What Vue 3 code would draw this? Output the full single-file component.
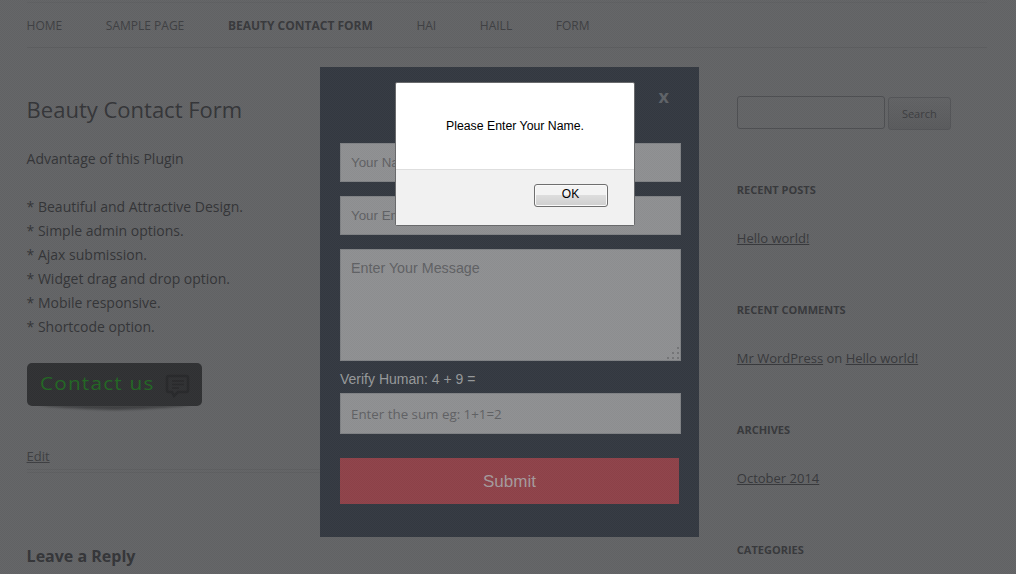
<script setup>
const nav = ['Home', 'Sample Page', 'Beauty Contact Form', 'Hai', 'Haill', 'Form']
const features = [
  'Beautiful and Attractive Design.',
  'Simple admin options.',
  'Ajax submission.',
  'Widget drag and drop option.',
  'Mobile responsive.',
  'Shortcode option.',
]
</script>

<template>
  <div class="page">
    <nav class="nav">
      <a v-for="n in nav" :key="n" :class="{ current: n === 'Beauty Contact Form' }">{{ n }}</a>
    </nav>
    <div class="columns">
      <main class="main">
        <h1>Beauty Contact Form</h1>
        <p class="lead">Advantage of this Plugin</p>
        <ul class="features">
          <li v-for="f in features" :key="f">* {{ f }}</li>
        </ul>
        <div class="contact">
          <svg class="shade" width="175" height="12" viewBox="0 0 175 12"><path d="M12 0H163Q150 3 88 5Q25 3 12 0Z" /></svg>
          <div class="contact-face">
            <svg width="175" height="43" viewBox="0 0 175 43">
              <text x="13" y="27" textLength="114.5" lengthAdjust="spacingAndGlyphs">Contact us</text>
              <path class="bubble" d="M142 13H159Q161 13 161 15V27Q161 29 159 29H151L147 33L145 29H142Q140 29 140 27V15Q140 13 142 13Z" />
              <path class="lines" d="M145 18H157M145 21.5H157M145 25H152" />
            </svg>
          </div>
        </div>
        <div class="edit"><a>Edit</a></div>
        <h2>Leave a Reply</h2>
      </main>
      <aside class="side">
        <div class="search"><span class="box"></span><span class="btn">Search</span></div>
        <section><h3>Recent Posts</h3><p><a>Hello world!</a></p></section>
        <section><h3>Recent Comments</h3><p><a>Mr WordPress</a> on <a>Hello world!</a></p></section>
        <section><h3>Archives</h3><p><a>October 2014</a></p></section>
        <section><h3>Categories</h3></section>
      </aside>
    </div>

    <div class="modal">
      <div class="close">x</div>
      <div class="field">Your Name</div>
      <div class="field">Your Email</div>
      <div class="field area">
        Enter Your Message
        <svg class="grip" width="12" height="12" viewBox="0 0 12 12">
          <path d="M10 0h2v2h-2zM5 5h2v2h-2zM10 5h2v2h-2zM0 10h2v2h-2zM5 10h2v2h-2zM10 10h2v2h-2z" />
        </svg>
      </div>
      <div class="verify">Verify Human: 4 + 9 =</div>
      <div class="field sum">Enter the sum eg: 1+1=2</div>
      <div class="submit">Submit</div>
    </div>
    <div class="texture"></div>

    <div class="alert">
      <div class="message">Please Enter Your Name.</div>
      <div class="actions"><button>OK</button></div>
    </div>
  </div>
</template>

<style>
body { margin: 0; overflow: hidden; }
</style>

<style scoped>
* { box-sizing: border-box; margin: 0; padding: 0; }
.page {
  position: relative; width: 1016px; height: 574px; overflow: hidden;
  background: #636466; color: #333437; font-family: "Open Sans", sans-serif;
}
.texture {
  position: absolute; inset: 0;
  background: repeating-conic-gradient(rgba(255,255,255,.02) 0 25%, rgba(0,0,0,.02) 0 50%) 0 0 / 2px 2px;
}
.nav {
  display: flex; gap: 43.6px; width: 960px; height: 46px; margin: 2px 0 0 26.6px;
  border-top: 1px solid #5f6062; border-bottom: 1px solid #5c5d5f;
  font-size: 12px; line-height: 46px; text-transform: uppercase; color: #3e3f42;
}
.nav a { white-space: nowrap; }
.nav .current { font-weight: 700; color: #38393c; }
.columns { display: flex; justify-content: space-between; width: 960.4px; margin-left: 26.6px; }
.main { width: 625px; }
h1 { margin-top: 48px; font-size: 22px; line-height: 27px; font-weight: 400; color: #343538; }
.lead { margin-top: 24px; font-size: 14px; line-height: 24px; }
.features { margin-top: 24px; list-style: none; font-size: 14px; line-height: 24px; }
.contact { position: relative; margin-top: 24px; height: 43px; width: 175px; }
.contact-face { position: relative; height: 43px; border-radius: 5px; background: #303133; }
.contact text { font-size: 17.5px; letter-spacing: 1px; fill: #236624; font-family: "Open Sans", sans-serif; }
.shade { position: absolute; left: 0; top: 42px; fill: #3f4042; filter: blur(1.2px); }
.bubble { fill: none; stroke: #28292b; stroke-width: 2.5; }
.lines { fill: none; stroke: #28292b; stroke-width: 1.5; }
.edit { margin-top: 38px; height: 26px; border-bottom: 1px solid #5e5f61; font-size: 13px; line-height: 24px; color: #3d3e41; position: relative; }
.edit::after { content: ""; position: absolute; left: 0; right: 0; bottom: -4px; height: 1px; background: #5e5f61; }
a { text-decoration: none; }
.edit a, .side a { text-decoration: underline; }
h2 { margin-top: 74px; font-size: 16px; line-height: 24px; font-weight: 700; color: #343538; }
.side { width: 250.2px; padding-top: 48px; }
.search { display: flex; gap: 3px; height: 82px; }
.box { width: 148px; height: 33px; border: 1px solid #4e4f52; border-radius: 3px; }
.btn {
  width: 63px; height: 33px; margin-top: 1px; border: 1px solid #545558; border-radius: 3px;
  background: linear-gradient(#626365, #5a5b5d); font-size: 11px; line-height: 32px; text-align: center; color: #3c3d40;
}
section { height: 120px; }
h3 { font-size: 11px; line-height: 24px; font-weight: 700; text-transform: uppercase; color: #37383b; }
section p { margin-top: 24px; font-size: 13px; line-height: 25px; color: #37383b; }
.modal {
  position: absolute; left: 320px; top: 67px; width: 379px; height: 470px; padding: 0 18px 0 20px;
  background: #343941; font-family: "Liberation Sans", Arial, sans-serif;
}
.close { height: 76px; padding: 17px 12px 0; text-align: right; font: 700 18px/24px "Open Sans", sans-serif; color: #5f6368; }
.field {
  height: 39px; margin-bottom: 14px; padding-left: 10px; border: 1px solid #7f8285; background: #8f9092;
  color: #606164; font-size: 13.33px; line-height: 37px;
}
.field.area { position: relative; height: 112px; margin-bottom: 6px; line-height: 36px; font-size: 14.3px; }
.grip { position: absolute; right: 1px; bottom: 1px; fill: #747577; }
.verify { height: 26px; font-size: 14px; line-height: 25px; color: #97999b; }
.field.sum { height: 41px; margin: 0 0 24px; font-family: "Open Sans", sans-serif; font-size: 13.33px; line-height: 40px; }
.submit { width: 339px; height: 46px; background: #8f4249; color: #a59a9d; font-size: 17px; line-height: 47px; text-align: center; }
.alert {
  position: absolute; left: 395px; top: 82px; width: 240px; height: 144px;
  border: 1px solid #696a6c; border-radius: 2px; background: #fff; font-family: "Liberation Sans", Arial, sans-serif; color: #000;
}
.message { height: 86px; font-size: 12.3px; line-height: 86px; text-align: center; }
.actions { height: 56px; padding: 14px 26px 0 0; border-top: 1px solid #dedede; background: #f1f1f1; text-align: right; }
button {
  display: block; width: 74px; height: 23px; margin-left: auto; padding: 0 1px 2px 0; border: 1px solid #6f6f6f; border-radius: 3px;
  background: linear-gradient(#f3f3f3 0 48%, #dddddd 50%, #cfcfcf);
  box-shadow: inset 0 0 0 1px #fafafa; font: 12px/19px "Liberation Sans", Arial, sans-serif; color: #000;
}
</style>
